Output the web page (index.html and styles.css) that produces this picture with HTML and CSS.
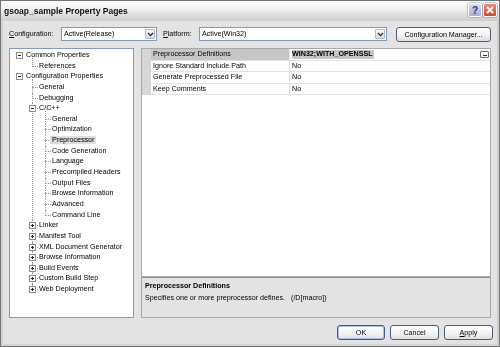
FILE: index.html
```html
<!DOCTYPE html>
<html>
<head>
<meta charset="utf-8">
<title>gsoap_sample Property Pages</title>
<link rel="stylesheet" href="styles.css">
</head>
<body>
<div class="window">
  <div class="titlebar">
    <span class="title">gsoap_sample Property Pages</span>
    <div class="caption-btns">
      <span class="cbtn help">?</span>
      <span class="cbtn close"><svg width="8" height="8" viewBox="0 0 8 8"><path d="M1 1 L7 7 M7 1 L1 7" stroke="#fff" stroke-width="1.8" fill="none"/></svg></span>
    </div>
  </div>
  <div class="client">
    <div class="toolbar">
      <span class="lbl lbl-config"><u>C</u>onfiguration:</span>
      <div class="combo combo-config">
        <span class="combo-text">Active(Release)</span>
        <span class="drop"><svg width="7" height="5" viewBox="0 0 7 5"><path d="M1 1 L3.5 3.6 L6 1" stroke="#2a2a2a" stroke-width="1.3" fill="none"/></svg></span>
      </div>
      <span class="lbl lbl-platform"><u>P</u>latform:</span>
      <div class="combo combo-platform">
        <span class="combo-text">Active(Win32)</span>
        <span class="drop"><svg width="7" height="5" viewBox="0 0 7 5"><path d="M1 1 L3.5 3.6 L6 1" stroke="#2a2a2a" stroke-width="1.3" fill="none"/></svg></span>
      </div>
      <button class="btn btn-cm"><span class="cap">Configuration Manager...</span></button>
    </div>

    <div class="main">
      <div class="tree">
        <ul class="tl">
          <li class="d0">
            <div class="row"><span class="exp"><span class="h"></span></span>Common Properties</div>
            <ul>
              <li class="d1"><div class="row">References</div></li>
            </ul>
          </li>
          <li class="d0">
            <div class="row"><span class="exp"><span class="h"></span></span>Configuration Properties</div>
            <ul>
              <li class="d1"><div class="row">General</div></li>
              <li class="d1"><div class="row">Debugging</div></li>
              <li class="d1">
                <div class="row"><span class="exp"><span class="h"></span></span>C/C++</div>
                <ul>
                  <li class="d2"><div class="row">General</div></li>
                  <li class="d2"><div class="row">Optimization</div></li>
                  <li class="d2"><div class="row"><span class="sel">Preprocessor</span></div></li>
                  <li class="d2"><div class="row">Code Generation</div></li>
                  <li class="d2"><div class="row">Language</div></li>
                  <li class="d2"><div class="row">Precompiled Headers</div></li>
                  <li class="d2"><div class="row">Output Files</div></li>
                  <li class="d2"><div class="row">Browse Information</div></li>
                  <li class="d2"><div class="row">Advanced</div></li>
                  <li class="d2"><div class="row">Command Line</div></li>
                </ul>
              </li>
              <li class="d1"><div class="row"><span class="exp"><span class="h"></span><span class="v"></span></span>Linker</div></li>
              <li class="d1"><div class="row"><span class="exp"><span class="h"></span><span class="v"></span></span>Manifest Tool</div></li>
              <li class="d1"><div class="row"><span class="exp"><span class="h"></span><span class="v"></span></span>XML Document Generator</div></li>
              <li class="d1"><div class="row"><span class="exp"><span class="h"></span><span class="v"></span></span>Browse Information</div></li>
              <li class="d1"><div class="row"><span class="exp"><span class="h"></span><span class="v"></span></span>Build Events</div></li>
              <li class="d1"><div class="row"><span class="exp"><span class="h"></span><span class="v"></span></span>Custom Build Step</div></li>
              <li class="d1"><div class="row"><span class="exp"><span class="h"></span><span class="v"></span></span>Web Deployment</div></li>
            </ul>
          </li>
        </ul>
      </div>

      <div class="right">
        <div class="grid">
          <div class="prow selected">
            <span class="gut"></span>
            <span class="pname">Preprocessor Definitions</span>
            <span class="pval"><b class="hl">WIN32;WITH_OPENSSL</b><span class="ell"><span class="dots"></span></span></span>
          </div>
          <div class="prow">
            <span class="gut"></span>
            <span class="pname">Ignore Standard Include Path</span>
            <span class="pval">No</span>
          </div>
          <div class="prow">
            <span class="gut"></span>
            <span class="pname">Generate Preprocessed File</span>
            <span class="pval">No</span>
          </div>
          <div class="prow">
            <span class="gut"></span>
            <span class="pname">Keep Comments</span>
            <span class="pval">No</span>
          </div>
        </div>
        <div class="desc">
          <div class="desc-title">Preprocessor Definitions</div>
          <div class="desc-text"><span class="desc-main">Specifies one or more preprocessor defines.</span><span>(/D[macro])</span></div>
        </div>
      </div>
    </div>

    <div class="footer">
      <button class="btn btn-ok"><span class="cap">OK</span></button>
      <button class="btn btn-cancel"><span class="cap">Cancel</span></button>
      <button class="btn btn-apply"><span class="cap"><u>A</u>pply</span></button>
    </div>
  </div>
</div>
</body>
</html>
```

FILE: styles.css
```css
* { box-sizing: border-box; }
html, body { margin: 0; padding: 0; }
body {
  width: 500px;
  height: 347px;
  overflow: hidden;
  font-family: "Liberation Sans", Arial, sans-serif;
  font-size: 7.15px;
  color: #000;
  background: #d2d2d2;
}
.window {
  width: 500px;
  height: 347px;
  border: 1px solid #737373;
  background: #d3d3d3;
  padding: 0 2px 2px 2px;
  display: flex;
  flex-direction: column;
}

/* grayscale text antialiasing, like the reference */
.title, .lbl, .combo-text, .cap, .tl, .prow, .desc {
  filter: grayscale(1);
}

/* title bar */
.titlebar {
  height: 20px;
  margin: 0 -2px;
  padding-left: 3px;
  display: flex;
  align-items: center;
  justify-content: space-between;
  background: linear-gradient(#fdfdfd, #eeeeee 45%, #d9d9d9 80%, #cfcfcf);
}
.title {
  font-weight: bold;
  font-size: 8.5px;
  color: #111;
}
.caption-btns {
  display: flex;
  gap: 1px;
  margin-right: 2px;
  align-self: flex-start;
  margin-top: 2px;
}
.cbtn {
  width: 14px;
  height: 14px;
  border: 1px solid #fff;
  border-radius: 2px;
  display: flex;
  align-items: center;
  justify-content: center;
  box-shadow: 0 0 0 0.5px #8c8c9c;
}
.help {
  background: linear-gradient(#dcdcf4, #a9acd6);
  color: #2f3478;
  font-weight: bold;
  font-size: 10px;
}
.close {
  background: linear-gradient(#ec8b73, #d14a2c);
}

/* client area */
.client {
  flex: 1;
  background: #e3e3e3;
  padding: 6px 0 0 6px;
  display: flex;
  flex-direction: column;
}
.toolbar {
  height: 15px;
  display: flex;
  align-items: flex-start;
}
.lbl {
  flex: none;
  line-height: 14px;
}
.lbl-config { width: 52px; }
.lbl-platform { width: 36px; margin-left: 6px; }
.combo {
  flex: none;
  height: 14px;
  background: #fff;
  border: 1px solid #7f9db9;
  display: flex;
  align-items: center;
  justify-content: space-between;
  padding: 1px 1px 1px 2px;
}
.combo-config { width: 96px; }
.combo-platform { width: 188px; }
.combo-text { line-height: 10px; }
.drop {
  width: 10px;
  height: 10px;
  border: 1px solid #b9b9c6;
  border-radius: 1px;
  background: linear-gradient(#fafafa, #d8d8de);
  display: flex;
  align-items: center;
  justify-content: center;
}
.btn {
  font-family: "Liberation Sans", Arial, sans-serif;
  font-size: 7.15px;
  color: #000;
  height: 15px;
  padding: 0;
  border: 1px solid #4e5d77;
  border-radius: 3px;
  background: linear-gradient(#ffffff, #f2f2f2 60%, #dedede);
}
.cap { display: inline-block; }
.btn-cm {
  flex: none;
  width: 95px;
  margin-left: 9px;
}

/* main area */
.main {
  margin-top: 6px;
  height: 270px;
  display: flex;
}
.tree {
  width: 125px;
  flex: none;
  border: 1px solid #7f9db9;
  background: #fff;
  padding-top: 1px;
  overflow: hidden;
}
.tree ul {
  list-style: none;
  margin: 0;
  padding: 0;
}
.tree li { position: relative; }
.row {
  position: relative;
  height: 10.65px;
  line-height: 10.65px;
  white-space: nowrap;
}
.d0 > .row { padding-left: 16px; }
.d1 > .row { padding-left: 29px; }
.d2 > .row { padding-left: 42px; }

.d1::before, .d2::before {
  content: "";
  position: absolute;
  top: 5px;
  width: 6px;
  border-top: 1px dotted #9a9a9a;
}
.d1::after, .d2::after {
  content: "";
  position: absolute;
  top: 0;
  bottom: 0;
  border-left: 1px dotted #9a9a9a;
}
.d1::before, .d1::after { left: 22px; }
.d2::before, .d2::after { left: 35px; }
.d1:first-child::after, .d2:first-child::after { top: -3px; }
.d1:last-child::after, .d2:last-child::after { bottom: auto; height: 6px; }
.d1:first-child:last-child::after { height: 9px; }

.exp {
  position: absolute;
  top: 2px;
  width: 7px;
  height: 7px;
  border: 1px solid #8e8e8e;
  background: #fff;
  z-index: 1;
}
.d0 > .row > .exp { left: 6px; }
.d1 > .row > .exp { left: 19px; }
.exp .h {
  position: absolute;
  left: 1px;
  top: 2px;
  width: 3px;
  height: 1px;
  background: #222;
}
.exp .v {
  position: absolute;
  left: 2px;
  top: 1px;
  width: 1px;
  height: 3px;
  background: #222;
}
.sel {
  background: #dedede;
  padding: 0 2px;
  margin-left: -2px;
}

.right {
  width: 350px;
  flex: none;
  margin-left: 7px;
  display: flex;
  flex-direction: column;
}
.grid {
  height: 229px;
  border: 1px solid #a9a9a9;
  background: #fff;
}
.prow {
  display: flex;
  height: 11.5px;
  line-height: 10.5px;
}
.gut {
  width: 9px;
  flex: none;
  background: #d6d6d6;
}
.pname {
  width: 139px;
  flex: none;
  padding-left: 2px;
  border-right: 1px solid #e2e2e2;
  border-bottom: 1px solid #e2e2e2;
  white-space: nowrap;
}
.pval {
  flex: 1;
  padding-left: 2px;
  border-bottom: 1px solid #e2e2e2;
  display: flex;
  align-items: center;
  justify-content: space-between;
}
.selected .pname { background: #c6c6c6; }
.hl {
  background: #c6c6c6;
  font-weight: bold;
  line-height: 9px;
  padding-right: 1px;
}
.ell {
  width: 9px;
  height: 7px;
  margin-right: 1px;
  border: 1px solid #5b6e8e;
  border-radius: 1px;
  background: #f7f7f7;
  display: flex;
  align-items: flex-end;
  justify-content: center;
  padding-bottom: 1px;
}
.ell .dots {
  width: 4px;
  height: 1px;
  background: #333;
}
.desc {
  height: 41px;
  border: 1px solid #a9a9a9;
  border-top-color: #8d8d8d;
  padding: 2px 3px 0 3px;
  line-height: 12px;
}
.desc-title { font-weight: bold; }
.desc-main {
  display: inline-block;
  width: 146px;
}

/* footer */
.footer {
  margin-top: 7px;
  padding-right: 4px;
  display: flex;
  justify-content: flex-end;
  gap: 5px;
}
.btn-ok { width: 48px; border-color: #3d5a8c; box-shadow: inset 0 0 0 1px #a8c0e8; }
.btn-cancel, .btn-apply { width: 49px; }
```
